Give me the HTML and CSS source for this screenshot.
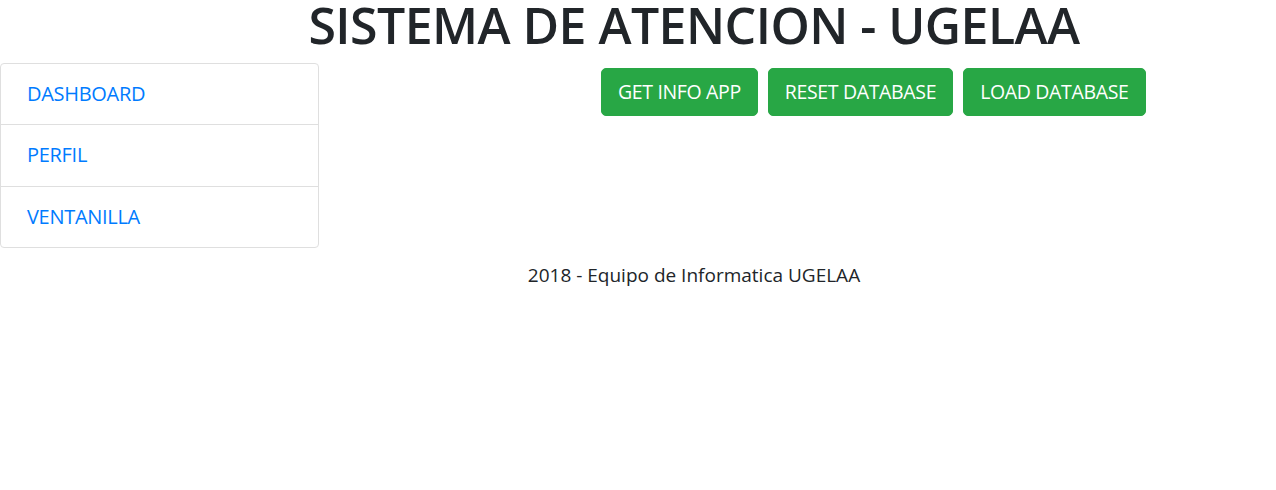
FILE: index.html
```html
<!DOCTYPE html>
<html lang="es">
<head>
<meta charset="utf-8">
<title>Sistema de Atencion - UGELAA</title>
<link rel="stylesheet" href="styles.css">
</head>
<body>
<header class="page-header">
  <h1 class="title">SISTEMA DE ATENCION - UGELAA</h1>
</header>
<div class="main-row">
  <nav class="list-group">
    <a class="list-item" href="#">DASHBOARD</a>
    <a class="list-item" href="#">PERFIL</a>
    <a class="list-item" href="#">VENTANILLA</a>
  </nav>
  <div class="content">
    <div class="actions">
      <button class="btn">GET INFO APP</button>
      <button class="btn">RESET DATABASE</button>
      <button class="btn">LOAD DATABASE</button>
    </div>
  </div>
</div>
<footer class="page-footer">2018 - Equipo de Informatica UGELAA</footer>
</body>
</html>
```
FILE: styles.css
```css
* { box-sizing: border-box; }
html, body { margin: 0; padding: 0; background: #fff; }
body {
  font-family: "Open Sans", "Noto Sans", sans-serif;
  color: #212529;
  width: 1276px;
}
.page-header { padding-left: 112px; }
.title {
  margin: 0;
  text-align: center;
  font-size: 50px;
  line-height: 50px;
  font-weight: 600;
  letter-spacing: -0.55px;
  color: #212529;
}
.main-row {
  display: flex;
  margin-top: 13px;
}
.list-group {
  width: 319px;
  display: flex;
  flex-direction: column;
  border: 1px solid #dfdfdf;
  border-radius: 4px;
}
.list-item {
  display: block;
  padding: 15px 26px 15.34px 26px;
  font-size: 20px;
  line-height: 30px;
  letter-spacing: -0.3px;
  color: #007bff;
  text-decoration: none;
}
.list-item + .list-item { border-top: 1px solid #dfdfdf; }
.content { flex: 1; }
.actions {
  display: flex;
  gap: 10px;
  margin-top: 5px;
  padding-left: 282px;
}
.btn {
  font-family: inherit;
  background: #28a745;
  color: #fff;
  border: 1px solid #28a745;
  border-radius: 5px;
  padding: 8px 16px;
  font-size: 19.5px;
  line-height: 30px;
  letter-spacing: -0.35px;
  cursor: pointer;
}
.page-footer {
  margin-top: 14px;
  padding-left: 112px;
  text-align: center;
  font-size: 19px;
  line-height: 27px;
}
```
